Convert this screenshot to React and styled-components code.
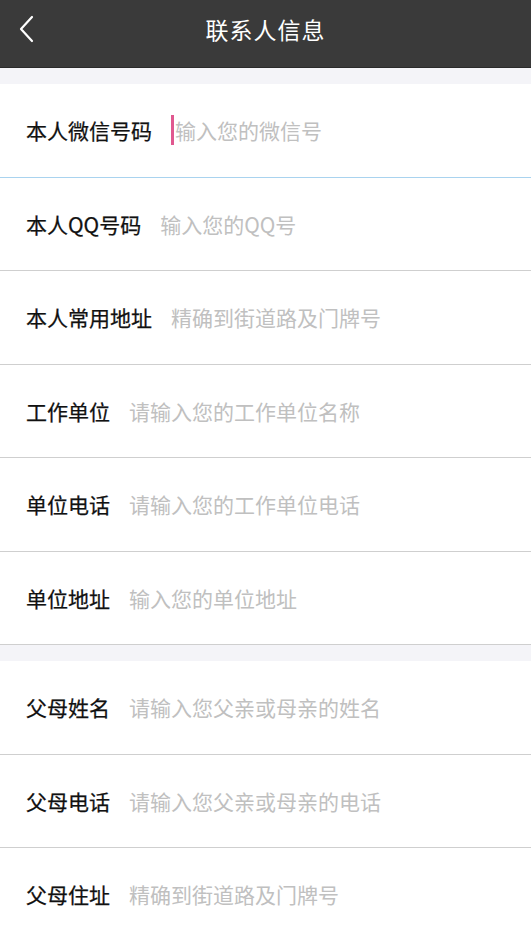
import React from 'react';
import styled, { createGlobalStyle } from 'styled-components';

const Global = createGlobalStyle`
  html, body { margin: 0; padding: 0; background: #ffffff; }
  body { font-family: "Noto Sans CJK SC", "Noto Sans", sans-serif; }
  * { box-sizing: border-box; }
`;

// 页面
const Page = styled.div`
  width: 531px;
  min-height: 939px;
  background: #fff;
`;

// 顶部栏
const Header = styled.div`
  height: 68px;
  background: #3a3a3a;
  display: flex;
  align-items: center;
  justify-content: center;
  position: relative;
  border-bottom: 1px solid #2a2a2a;
`;
const BackBtn = styled.button`
  position: absolute;
  left: 12px;
  top: 12px;
  width: 28px;
  height: 34px;
  padding: 0;
  border: none;
  background: transparent;
  display: flex;
  align-items: center;
  justify-content: center;
`;
const Title = styled.h1`
  margin: 0 0 10px;
  color: #fff;
  font-size: 23px;
  font-weight: 400;
  letter-spacing: 1px;
`;

// 分组间隔
const Gap = styled.div`
  height: 16px;
  background: #f4f4f8;
`;

// 表单行
const Row = styled.label`
  height: 93.5px;
  display: flex;
  align-items: center;
  padding-left: 26px;
  border-bottom: 1px solid ${p => (p.$active ? '#a9d3ef' : '#cfcfcf')};
  background: #fff;
`;
const Label = styled.span`
  font-size: 21px;
  font-weight: 400;
  color: #111;
  white-space: nowrap;
  margin-right: 19px;
  -webkit-text-stroke: 0.25px #111;
`;
const Caret = styled.span`
  width: 3px;
  height: 30px;
  background: #e0588f;
  margin-right: 1px;
  flex-shrink: 0;
`;
const Input = styled.input`
  flex: 1;
  border: none;
  outline: none;
  padding: 0;
  font-size: 21px;
  font-family: inherit;
  color: #333;
  background: transparent;
  &::placeholder { color: #c0c0c0; }
`;

const groupA = [
  { label: '本人微信号码', ph: '输入您的微信号', active: true },
  { label: '本人QQ号码', ph: '输入您的QQ号' },
  { label: '本人常用地址', ph: '精确到街道路及门牌号' },
  { label: '工作单位', ph: '请输入您的工作单位名称' },
  { label: '单位电话', ph: '请输入您的工作单位电话' },
  { label: '单位地址', ph: '输入您的单位地址' },
];
const groupB = [
  { label: '父母姓名', ph: '请输入您父亲或母亲的姓名' },
  { label: '父母电话', ph: '请输入您父亲或母亲的电话' },
  { label: '父母住址', ph: '精确到街道路及门牌号' },
];

const Field = ({ label, ph, active }) => (
  <Row $active={active}>
    <Label>{label}</Label>
    {active && <Caret />}
    <Input placeholder={ph} />
  </Row>
);

export default function App() {
  return (
    <Page>
      <Global />
      <Header>
        <BackBtn aria-label="返回">
          <svg width="18" height="28" viewBox="0 0 18 28">
            <path d="M15 2 L4 14 L15 26" fill="none" stroke="#fff" strokeWidth="2.2" strokeLinecap="round" strokeLinejoin="round" />
          </svg>
        </BackBtn>
        <Title>联系人信息</Title>
      </Header>
      <Gap />
      {groupA.map(f => <Field key={f.label} {...f} />)}
      <Gap />
      {groupB.map(f => <Field key={f.label} {...f} />)}
    </Page>
  );
}
